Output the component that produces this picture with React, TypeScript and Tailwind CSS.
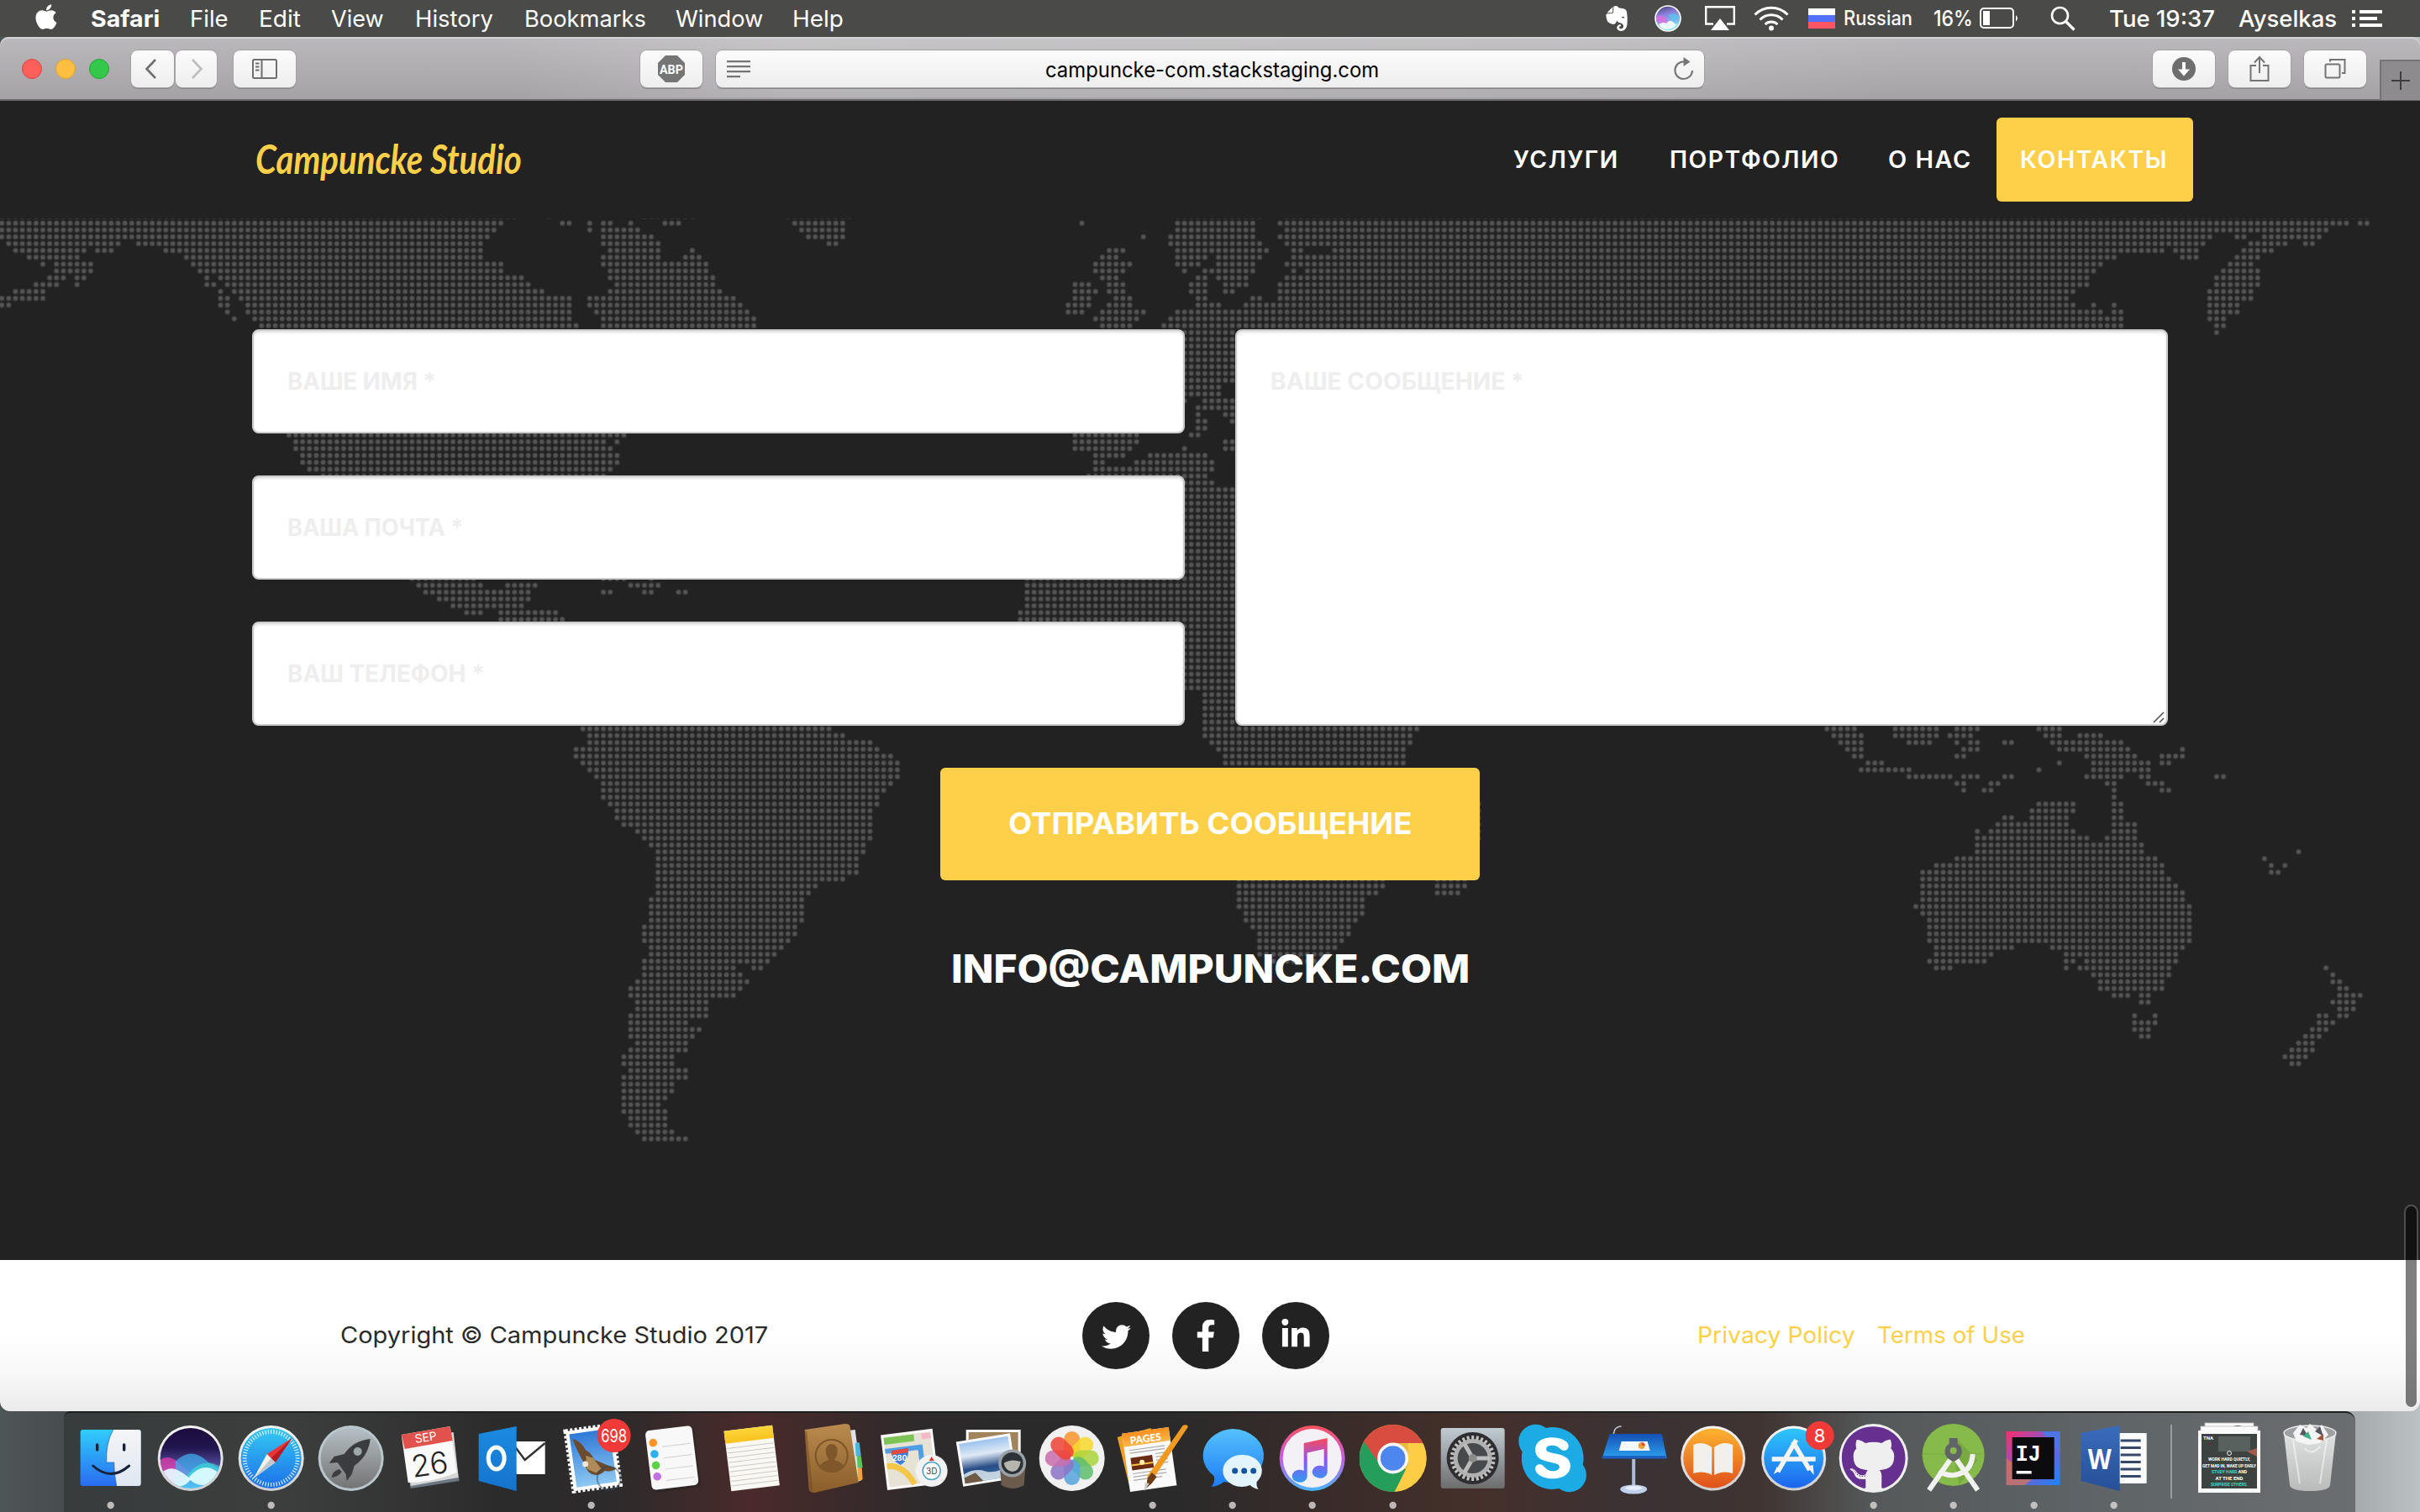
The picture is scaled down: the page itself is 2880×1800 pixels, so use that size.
import React, { useLayoutEffect, useRef, useState } from "react";
import { FaApple, FaEvernote, FaTwitter, FaFacebookF, FaLinkedinIn, FaGithub, FaSkype } from "react-icons/fa";

/* ------------------------------------------------------------------ */
/* Text squeezed or stretched to a fixed measure                       */
/* ------------------------------------------------------------------ */

function Fit({ w, className = "", children }: { w: number; className?: string; children: string }) {
  const ref = useRef<HTMLSpanElement>(null);
  const [scale, setScale] = useState(1);
  useLayoutEffect(() => {
    if (ref.current) setScale(w / ref.current.offsetWidth);
  }, [w]);
  return (
    <span className={`inline-block shrink-0 whitespace-nowrap ${className}`} style={{ width: w }}>
      <span ref={ref} className="inline-block origin-left" style={{ transform: `scaleX(${scale})` }}>
        {children}
      </span>
    </span>
  );
}

/* ------------------------------------------------------------------ */
/* Dotted world map                                                    */
/* ------------------------------------------------------------------ */

const PITCH = 8.135;
const COL0 = 2.2;
const ROW0 = 265.65;

type Region = { x: number; unit: number; rows: [number, ...number[]][] };

// Each row: row index, then start/end pairs measured in the region's own units.
const REGIONS: Region[] = [
  {
    x: 0,
    unit: 1.0814,
    rows: [
      [-1, 0, 662, 707, 707, 830, 892, 1015, 1095],
      [0, 0, 648, 725, 733, 759, 759, 777, 786, 812, 812, 857, 874, 1024, 1086],
      [1, 0, 640, 759, 759, 777, 822, 1032, 1086],
      [2, 0, 630, 777, 838, 1041, 1086],
      [3, 12, 152, 180, 620, 777, 848, 1068, 1077],
      [4, 20, 110, 127, 145, 215, 620, 786, 848, 891, 891],
      [5, 38, 100, 241, 620, 777, 848, 883, 900],
      [6, 55, 55, 72, 118, 250, 645, 777, 910],
      [7, 72, 118, 258, 645, 786, 910],
      [8, 65, 82, 100, 109, 267, 267, 284, 672, 786, 918],
      [9, 46, 74, 100, 100, 267, 276, 293, 681, 795, 918],
      [10, 20, 56, 285, 285, 302, 698, 786, 927],
      [11, 3, 56, 284, 293, 311, 733, 759, 945],
      [12, 3, 12, 284, 293, 320, 733, 759, 954],
      [13, 293, 293, 320, 733, 768, 962],
      [14, 302, 302, 328, 733, 777, 971],
      [15, 337, 742, 777, 971],
      [31, 373, 804, 1385, 1463],
      [32, 381, 777, 795, 795, 1385, 1463],
      [33, 381, 786, 1385, 1455],
      [34, 390, 795, 1411, 1446, 1481, 1516],
      [35, 390, 795, 1411, 1420, 1463, 1516],
      [36, 399, 786, 1411, 1516],
      [37, 417, 777, 1402, 1516],
      [52, 532, 612, 777, 804, 839, 839, 1323, 1516],
      [53, 540, 618, 655, 690, 812, 848, 1323, 1516],
      [54, 549, 681, 777, 786, 830, 839, 874, 883, 1323, 1516],
      [55, 567, 681, 1323, 1516],
      [56, 585, 672, 1323, 1516],
      [57, 602, 620, 646, 716, 1314, 1516],
      [58, 646, 725, 1314, 1516],
    ],
  },
  {
    x: 1200,
    unit: 3,
    rows: [
      [-1, 606, 900],
      [0, 264, 264, 606, 875],
      [1, 606, 875],
      [2, 484, 484, 582, 875],
      [3, 582, 900],
      [4, 362, 411, 606, 925],
      [5, 338, 387, 606, 705, 752, 900],
      [6, 313, 436, 606, 680, 752, 875],
      [7, 313, 411, 630, 630, 704, 875],
      [8, 338, 387, 680, 705, 752, 850],
      [9, 240, 289, 362, 411, 655, 705, 777, 850],
      [10, 240, 313, 362, 411, 655, 705, 777, 802],
      [11, 240, 289, 387, 436, 680, 705, 875, 900],
      [12, 215, 289, 362, 436, 680, 753, 850, 948],
      [13, 215, 264, 338, 484, 606, 948],
      [14, 313, 460, 582, 948],
      [15, 338, 436, 557, 948],
    ],
  },
  {
    x: 1400,
    unit: 1.0595,
    rows: [
      [-1, 140, 1505],
      [0, 132, 1475, 1494, 1503],
      [1, 140, 1450],
      [2, 132, 1303, 1339, 1348, 1374, 1442],
      [3, 140, 1295, 1356, 1399, 1425, 1434],
      [4, 149, 158, 200, 1244, 1261, 1287, 1348, 1382],
      [5, 149, 1184, 1270, 1287, 1339, 1365],
      [6, 140, 1167, 1330, 1356],
      [7, 149, 149, 166, 1158, 1322, 1365],
      [8, 140, 1150, 1313, 1365],
      [9, 132, 1150, 1313, 1365],
      [10, 132, 1132, 1304, 1356],
      [11, 132, 1124, 1304, 1356],
      [12, 132, 1132, 1158, 1158, 1184, 1184, 1304, 1339],
      [13, 132, 1167, 1184, 1193, 1304, 1339],
      [14, 132, 1193, 1304, 1322],
      [15, 132, 1193, 1313, 1322],
      [16, 3, 72, 1313, 1313],
      ...[17, 18, 19, 20, 21, 22, 23].map((r): [number, number, number] => [r, 3, 72]),
      [24, 3, 54],
      [25, 3, 54],
      [26, 11, 11, 37, 72],
      [27, 28, 72],
      [28, 28, 28, 63, 72],
      [29, 28, 37, 72, 72],
      [30, 28, 37],
      [31, 20, 28],
      [32, 63, 72],
      [33, 11, 11, 63, 72],
      [34, 3, 37],
      [35, 3, 46],
      [36, 3, 46],
      [37, 3, 37],
      [38, 3, 46],
      ...Array.from({ length: 30 }, (_, i): [number, number, number] => [39 + i, 3, 72]),
      ...[69, 70, 71, 72, 73].map((r): [number, number, number] => [r, 37, 72]),
    ],
  },
  {
    x: 600,
    unit: 1.2544,
    rows: [
      [74, 117, 487, 1047, 1365],
      [75, 127, 507, 1047, 1355],
      [76, 127, 548, 1057, 1355],
      [77, 107, 558, 1067, 1345],
      [78, 107, 578, 1077, 1345],
      [79, 117, 589, 1077, 1345],
      [80, 127, 589],
      [81, 138, 589],
      [82, 148, 578],
      [83, 148, 568],
      [84, 148, 558],
      [85, 158, 558, 1454, 1454],
      [86, 168, 548, 1454, 1454],
      [87, 168, 548, 1454, 1454],
      [88, 178, 548, 1454, 1454],
      [89, 199, 548, 1454, 1454],
      [90, 209, 548, 1454, 1454],
      [91, 219, 538],
      [92, 230, 538],
      [93, 230, 528],
      [94, 230, 528],
      [95, 230, 528],
      [96, 230, 507, 1098, 1314, 1395, 1436],
      [97, 230, 466, 1098, 1314, 1395, 1436],
      [98, 230, 456, 1098, 1304, 1395, 1426],
      [99, 219, 446, 1098, 1283],
      [100, 219, 446, 1098, 1283],
      [101, 219, 446, 1108, 1283],
      [102, 219, 446, 1108, 1273],
      [103, 209, 436, 1118, 1263],
      [104, 209, 436, 1128, 1263],
      [105, 209, 425, 1128, 1253],
      [106, 219, 415, 1128, 1243],
      [107, 219, 405, 1128, 1233],
      [108, 209, 395, 1150, 1212],
      [109, 209, 344, 374, 384],
      [110, 209, 354],
      [111, 199, 364],
      [112, 189, 354],
      [113, 189, 344],
      [114, 199, 303],
      [115, 199, 303],
      [116, 189, 303],
      [117, 189, 273],
      [118, 189, 293],
      [119, 189, 283],
      [120, 199, 273],
      [121, 189, 273],
      [122, 179, 252],
      [123, 179, 252],
      [124, 189, 273],
      [125, 179, 273],
      [126, 179, 252],
      [127, 179, 252],
      [128, 179, 242],
      [129, 179, 232],
      [130, 179, 242],
      [131, 189, 242],
      [132, 189, 242],
      [133, 199, 252],
      [134, 209, 273],
    ],
  },
  {
    x: 1800,
    unit: 1.4519,
    rows: [
      [74, 545, 592, 663, 734, 770, 805, 912, 946],
      [75, 556, 604, 663, 734, 758, 793, 923, 947, 982, 1018],
      [76, 568, 604, 687, 722, 770, 770, 793, 805, 852, 864, 935, 1053],
      [77, 580, 604, 782, 805, 947, 1065, 1159, 1159],
      [78, 592, 604, 770, 782, 995, 1077, 1124, 1159],
      [79, 615, 639, 947, 947, 1006, 1100, 1124, 1136],
      [80, 604, 687, 911, 911, 1006, 1100],
      [81, 687, 758, 782, 805, 852, 864, 995, 1053, 1088, 1100, 1218, 1230],
      [82, 770, 782, 829, 840, 1030, 1041, 1100, 1124],
      [83, 782, 782, 817, 829, 1041, 1041, 1124, 1136],
      [84, 1041, 1041],
      [85, 911, 970, 1041, 1053],
      [86, 900, 970, 1041, 1053],
      [87, 852, 864, 900, 958, 1041, 1053],
      [88, 840, 958, 1041, 1077],
      [89, 805, 805, 829, 970, 1041, 1077],
      [90, 805, 994, 1030, 1077],
      [91, 805, 1088],
      [92, 805, 1088, 1360, 1360],
      [93, 770, 1112, 1301, 1301],
      [94, 734, 1124, 1313, 1313, 1336, 1336],
      [95, 710, 1124, 1313, 1324],
      [96, 710, 1136],
      [97, 710, 1147],
      [98, 710, 1159],
      [99, 710, 1159],
      [100, 698, 1171],
      [101, 710, 1171],
      [102, 722, 1171],
      [103, 722, 1171],
      [104, 722, 1171],
      [105, 722, 1171],
      [106, 734, 864, 935, 1159],
      [107, 734, 829, 958, 1147],
      [108, 722, 817, 958, 970, 994, 1147],
      [109, 734, 758, 958, 958, 982, 1136, 1407, 1407],
      [110, 1006, 1136, 1419, 1419],
      [111, 1018, 1124, 1419, 1430],
      [112, 1018, 1124, 1430, 1442],
      [113, 1041, 1065, 1088, 1100, 1430, 1466],
      [114, 1088, 1100, 1419, 1454],
      [115, 1430, 1454],
      [116, 1077, 1077, 1112, 1112, 1395, 1407, 1430, 1442],
      [117, 1077, 1112, 1395, 1419],
      [118, 1077, 1100, 1384, 1407],
      [119, 1088, 1100, 1372, 1395],
      [120, 1360, 1384],
      [121, 1348, 1384],
      [122, 1336, 1372],
      [123, 1348, 1360],
    ],
  },
];

function buildDots(): string {
  const seen = new Set<string>();
  let d = "";
  for (const { x, unit, rows } of REGIONS) {
    const col = (v: number) => Math.round((x + v / unit - COL0) / PITCH);
    for (const [row, ...spans] of rows) {
      for (let i = 0; i < spans.length; i += 2) {
        for (let c = col(spans[i]); c <= col(spans[i + 1]); c++) {
          const key = `${row}:${c}`;
          if (seen.has(key)) continue;
          seen.add(key);
          d += `M${(COL0 + c * PITCH).toFixed(2)} ${(ROW0 + row * PITCH).toFixed(2)}h.01`;
        }
      }
    }
  }
  return d;
}

const DOTS = buildDots();

function WorldMap() {
  return (
    <svg className="absolute inset-0 h-full w-full" viewBox="0 260 2880 1240">
      <path d={DOTS} stroke="#383838" strokeWidth={7} strokeLinecap="round" />
      <path d={DOTS} stroke="#545454" strokeWidth={4.8} strokeLinecap="round" />
    </svg>
  );
}

/* ------------------------------------------------------------------ */
/* Menu bar                                                            */
/* ------------------------------------------------------------------ */

function MenuBar() {
  return (
    <div className="flex h-[44px] shrink-0 items-center bg-[#4a4a48] pr-[45px] pl-[40px] font-['Inter'] text-[27.5px] leading-[44px] text-white">
      <FaApple className="mt-[-5px] mr-[38px] h-[34px] w-[30px]" />
      <Fit w={82} className="mr-[36px] font-bold">Safari</Fit>
      <Fit w={46} className="mr-[36px]">File</Fit>
      <Fit w={50} className="mr-[36px]">Edit</Fit>
      <Fit w={63} className="mr-[37px]">View</Fit>
      <Fit w={93} className="mr-[37px]">History</Fit>
      <Fit w={145} className="mr-[35px]">Bookmarks</Fit>
      <Fit w={104} className="mr-[35px]">Window</Fit>
      <Fit w={61}>Help</Fit>
      <div className="ml-auto flex items-center">
        <FaEvernote className="mr-[28px] h-[34px] w-[34px]" />
        <svg className="mr-[28px]" width="32" height="32" viewBox="0 0 32 32">
          <defs>
            <linearGradient id="mSiri" x1="0" y1="0" x2="0.3" y2="1">
              <stop offset="0" stopColor="#3b3b66" />
              <stop offset=".4" stopColor="#8a7fdc" />
              <stop offset="1" stopColor="#7fe6f5" />
            </linearGradient>
          </defs>
          <circle cx="16" cy="16" r="15" fill="url(#mSiri)" stroke="#fff" strokeWidth="1.6" />
          <path d="M2 15q6-6 12 1t-7 7q-5-4-5-8z" fill="#e06be0" opacity=".8" />
          <path d="M17 12q8-4 12 3l-6 5z" fill="#58c6f0" opacity=".8" />
          <path d="M5 23q6-4 9-1 4-6 9-1t4 1q-4 7-12 7-7 0-10-6z" fill="#fff" opacity=".85" />
        </svg>
        <svg className="mr-[22px]" width="36" height="30" viewBox="0 0 36 30" fill="none" stroke="#fff" strokeWidth="2.4">
          <path d="M10 21.500H1.200V1.200h33.600V21.500H26" />
          <path d="M18 15l11 14H7z" fill="#fff" stroke="none" />
        </svg>
        <svg className="mr-[23px]" width="42" height="30" viewBox="0 0 42 30" fill="none" stroke="#fff" strokeWidth="3">
          <path d="M1.500 10.500a27 27 0 0 1 39 0M7.500 16.500a19 19 0 0 1 27 0M13.500 22a11 11 0 0 1 15 0" />
          <circle cx="21" cy="26.500" r="3" fill="#fff" stroke="none" />
        </svg>
        <div className="mr-[10px] h-[24px] w-[32px]">
          <div className="h-[8px] bg-white" />
          <div className="h-[8px] bg-[#5470fb]" />
          <div className="h-[8px] bg-[#fd5562]" />
        </div>
        <Fit w={82} className="mr-[25px] text-[24px] font-medium">Russian</Fit>
        <Fit w={47} className="mr-[8px] text-[26px] font-medium">16%</Fit>
        <svg className="mr-[38px]" width="46" height="26" viewBox="0 0 46 26" fill="none" stroke="#fff" strokeWidth="2">
          <rect x="1" y="1" width="39" height="23" rx="4" />
          <rect x="4" y="4" width="8" height="17" fill="#fff" stroke="none" />
          <path d="M43 9q4 3.500 0 7.500z" fill="#fff" stroke="none" />
        </svg>
        <svg className="mr-[40px]" width="30" height="30" viewBox="0 0 30 30" fill="none" stroke="#fff" strokeWidth="2.6">
          <circle cx="11.500" cy="11.500" r="9.500" />
          <path d="M18.500 18.500l10 10" strokeWidth="3.200" />
        </svg>
        <Fit w={126} className="mr-[28px] font-medium">Tue 19:37</Fit>
        <Fit w={117} className="mr-[18px] font-medium">Ayselkas</Fit>
        <svg width="36" height="22" viewBox="0 0 36 22" fill="#fff">
          <path d="M0 1h4v4H0zM9 1h27v4H9zM0 9h4v4H0zM9 9h21v4H9zM0 17h4v4H0zM9 17h27v4H9z" />
        </svg>
      </div>
    </div>
  );
}

/* ------------------------------------------------------------------ */
/* Safari toolbar                                                      */
/* ------------------------------------------------------------------ */

function ToolButton({ className, children }: { className: string; children: React.ReactNode }) {
  return (
    <div
      className={`flex h-[44px] shrink-0 items-center justify-center rounded-[8px] bg-linear-to-b from-[#fbfbfb] to-[#eeeeee] shadow-[0_0_0_1px_#a3a1a3,0_2px_0_#8b898b] ${className}`}
    >
      {children}
    </div>
  );
}

function Toolbar() {
  return (
    <div className="relative h-[76px] shrink-0 rounded-t-[10px] border-b-[2px] border-[#6c6b6c] bg-linear-to-b from-[#bbb9bb] to-[#a4a2a5] shadow-[inset_0_2px_0_#d4d3d4]">
      <div className="absolute inset-x-[600px] inset-y-[2px] bg-[linear-gradient(90deg,transparent,rgba(255,255,255,.18)_20%,rgba(255,255,255,.12)_75%,transparent)]" />
      <div className="relative flex h-[76px] items-center pl-[26px]">
        <div className="mr-[16px] h-[24px] w-[24px] rounded-full border border-[#e0443f] bg-[#fd5f5a]" />
        <div className="mr-[16px] h-[24px] w-[24px] rounded-full border border-[#dfa032] bg-[#fdbe41]" />
        <div className="mr-[26px] h-[24px] w-[24px] rounded-full border border-[#21a532] bg-[#33c84a]" />
        <ToolButton className="mr-[2px] w-[51px]">
          <svg className="mr-[4px]" width="16" height="26" viewBox="0 0 16 26" fill="none" stroke="#6f6f6f" strokeWidth="2.600">
            <path d="M13 2L2.500 13 13 24" />
          </svg>
        </ToolButton>
        <ToolButton className="mr-[20px] w-[49px]">
          <svg width="16" height="26" viewBox="0 0 16 26" fill="none" stroke="#bdbdbd" strokeWidth="2.600">
            <path d="M3 2l10.500 11L3 24" />
          </svg>
        </ToolButton>
        <ToolButton className="w-[74px]">
          <svg width="30" height="24" viewBox="0 0 30 24" fill="none" stroke="#6f6f6f" strokeWidth="2">
            <rect x="1" y="1" width="28" height="22" rx="1.500" />
            <path d="M11.500 1v22M4 5.500h4.500M4 9.500h4.500M4 13.500h4.500" />
          </svg>
        </ToolButton>
        <ToolButton className="mr-[16px] ml-[410px] w-[74px]">
          <svg width="34" height="34" viewBox="0 0 34 34">
            <path d="M10 1h14l9 9v14l-9 9H10l-9-9V10z" fill="#757575" />
            <text x="17" y="22.500" textAnchor="middle" textLength="28" lengthAdjust="spacingAndGlyphs" fontFamily="Roboto" fontWeight="700" fontSize="15" fill="#fff">
              ABP
            </text>
          </svg>
        </ToolButton>
        <ToolButton className="w-[1176px]">
          <svg className="ml-[13px]" width="28" height="22" viewBox="0 0 28 22" fill="#747474">
            <path d="M0 1h28v2.200H0zM0 7h28v2.200H0zM0 13h28v2.200H0zM0 19h16v2.200H0z" />
          </svg>
          <div className="mt-[2px] flex-1 text-center font-['Inter'] text-[25px] leading-[44px] text-black">
            <Fit w={397} className="text-left">campuncke-com.stackstaging.com</Fit>
          </div>
          <svg className="mr-[12px]" width="24" height="28" viewBox="0 0 24 28" fill="none" stroke="#767676" strokeWidth="2.200">
            <path d="M13 5.500A10.300 10.300 0 1 0 22 16" />
            <path d="M11.500 0l8 5.500-8 5.500z" fill="#767676" stroke="none" />
          </svg>
        </ToolButton>
        <ToolButton className="mr-[16px] ml-[534px] w-[74px]">
          <svg width="28" height="28" viewBox="0 0 28 28">
            <circle cx="14" cy="14" r="14" fill="#6d6d6d" />
            <path d="M12 6h4v8.500h5L14 22.500 7 14.500h5z" fill="#fff" />
          </svg>
        </ToolButton>
        <ToolButton className="mr-[16px] w-[74px]">
          <svg width="24" height="32" viewBox="0 0 24 32" fill="none" stroke="#747474" strokeWidth="2">
            <path d="M8 12H1.500v18h21V12H16M12 21V3M6 8.500l6-6.500 6 6.500" />
          </svg>
        </ToolButton>
        <ToolButton className="w-[74px]">
          <svg width="26" height="26" viewBox="0 0 26 26" fill="none" stroke="#747474" strokeWidth="2">
            <rect x="1.500" y="7.500" width="17" height="16" rx="1.500" />
            <path d="M7 4.500V2h17.500v16H21" />
          </svg>
        </ToolButton>
        <div className="mt-[26px] ml-[16px] flex h-[48px] w-[48px] items-center justify-center border-t-[2px] border-l-[2px] border-[#767476] bg-[#8d8b8e]">
          <svg width="22" height="22" viewBox="0 0 22 22" stroke="#3e3e3e" strokeWidth="2">
            <path d="M11 0v22M0 11h22" />
          </svg>
        </div>
      </div>
    </div>
  );
}

/* ------------------------------------------------------------------ */
/* Web page                                                            */
/* ------------------------------------------------------------------ */

function SiteHeader() {
  return (
    <header className="flex h-[140px] shrink-0 items-center bg-[#222222] pr-[270px] pl-[304px] font-['Inter'] text-[28px] font-semibold text-white">
      <Fit w={317} className="mt-[-2px] font-['Lato'] text-[47px] leading-[60px] font-bold text-[#fed049] italic">Campuncke Studio</Fit>
      <nav className="ml-auto flex items-center tracking-[1.5px]">
        <Fit w={126} className="mr-[60px]">УСЛУГИ</Fit>
        <Fit w={202} className="mr-[58px]">ПОРТФОЛИО</Fit>
        <Fit w={100} className="mr-[29px]">О НАС</Fit>
        <div className="flex h-[100px] w-[234px] items-center rounded-[6px] bg-[#fed049] pl-[28px]">
          <Fit w={176}>КОНТАКТЫ</Fit>
        </div>
      </nav>
    </header>
  );
}

function Field({ label, w, tall = false }: { label: string; w: number; tall?: boolean }) {
  return (
    <div
      className={`relative w-[1110px] rounded-[8px] border-[2px] border-[#cccccc] bg-white pt-[38px] pl-[40px] font-['Inter'] text-[28px] leading-[44px] font-bold text-[#eeeeee] shadow-[inset_0_2px_3px_rgba(0,0,0,.12)] ${tall ? "h-[472px]" : "h-[124px]"}`}
    >
      <Fit w={w}>{label}</Fit>
      {tall && (
        <svg className="absolute right-[1px] bottom-[1px]" width="16" height="16" viewBox="0 0 16 16" stroke="#555" strokeWidth="1.600">
          <path d="M2 15L14 3M9 15l5-5" />
        </svg>
      )}
    </div>
  );
}

function ContactSection() {
  return (
    <main className="relative h-[1240px] shrink-0 bg-[#222222]">
      <WorldMap />
      <div className="relative flex flex-col items-center pt-[132px]">
        <div className="flex gap-[60px]">
          <div className="flex flex-col gap-[50px]">
            <Field label="ВАШЕ ИМЯ *" w={177} />
            <Field label="ВАША ПОЧТА *" w={209} />
            <Field label="ВАШ ТЕЛЕФОН *" w={235} />
          </div>
          <Field label="ВАШЕ СООБЩЕНИЕ *" w={302} tall />
        </div>
        <div className="mt-[50px] flex h-[134px] w-[642px] items-center justify-center rounded-[6px] bg-[#fed049] font-['Inter'] text-[36px] leading-[44px] font-bold text-white">
          <Fit w={480} className="mt-[-3px]">ОТПРАВИТЬ СООБЩЕНИЕ</Fit>
        </div>
        <div className="mt-[75px] font-['Inter'] text-[47px] leading-[60px] font-extrabold text-white">
          <Fit w={617}>INFO@CAMPUNCKE.COM</Fit>
        </div>
      </div>
    </main>
  );
}

function Social({ children }: { children: React.ReactNode }) {
  return <div className="flex h-[80px] w-[80px] items-center justify-center rounded-full bg-[#222222] text-white">{children}</div>;
}

function SiteFooter() {
  return (
    <footer className="flex h-[180px] shrink-0 items-center rounded-b-[12px] bg-[linear-gradient(180deg,#fff_0,#fff_48%,#f8f8f8_75%,#ebebeb_100%)] pl-[405px] font-['Inter'] text-[27px] text-[#2a2a2a]">
      <Fit w={509}>Copyright © Campuncke Studio 2017</Fit>
      <div className="ml-[374px] flex gap-[27px]">
        <Social>
          <FaTwitter className="mt-[3px] h-[35px] w-[35px]" />
        </Social>
        <Social>
          <FaFacebookF className="h-[38px] w-[24px]" />
        </Social>
        <Social>
          <FaLinkedinIn className="mt-[-2px] h-[38px] w-[36px]" />
        </Social>
      </div>
      <Fit w={188} className="ml-[438px] text-[#fed049]">Privacy Policy</Fit>
      <Fit w={176} className="ml-[26px] text-[#fed049]">Terms of Use</Fit>
    </footer>
  );
}

/* ------------------------------------------------------------------ */
/* Dock                                                                */
/* ------------------------------------------------------------------ */

function Cell({ running = false, children }: { running?: boolean; children: React.ReactNode }) {
  return (
    <svg className="w-[95.370px] shrink-0 overflow-visible" height="118" viewBox="-47.685 2 95.370 118">
      {children}
      {running && <circle cx="0" cy="112" r="4.200" fill="#d6d0d0" fillOpacity=".85" />}
    </svg>
  );
}

function Badge({ x, y, r, label }: { x: number; y: number; r: number; label: string }) {
  return (
    <>
      <circle cx={x} cy={y} r={r} fill="#f03a37" />
      <text x={x} y={y + 8} textAnchor="middle" fontFamily="Inter" fontSize="22" fill="#fff" textLength={label.length > 1 ? 31 : undefined} lengthAdjust="spacingAndGlyphs">
        {label}
      </text>
    </>
  );
}

function Gradients() {
  const g: [string, string[]][] = [
    ["finder", ["#2fcdfb", "#2a6cf0"]],
    ["face", ["#f4f5f7", "#dfe7f1"]],
    ["siri", ["#1c0a3c", "#22164f", "#5a52a8", "#7ce8f4"]],
    ["compass", ["#35c9f2", "#1c6fe8"]],
    ["launch", ["#b5bfc5", "#747474"]],
    ["ring", ["#f6f6f6", "#cfcfcf"]],
    ["outlook", ["#1a8be0", "#1573cd"]],
    ["mail", ["#2f79d8", "#8cc8f2"]],
    ["notesTop", ["#fbd53a", "#f9c31f"]],
    ["contacts", ["#b98b4f", "#8a5d2b"]],
    ["sea", ["#9cc3ee", "#dfe9f5", "#274c86", "#3f74a6"]],
    ["pagesTop", ["#f78f1e", "#fbb74b"]],
    ["msg", ["#55c1fb", "#1d7ef7"]],
    ["note", ["#fb4b57", "#8d55f2", "#2f9bf2"]],
    ["ringTunes", ["#f9525c", "#c65be8", "#46b8f7"]],
    ["prefs", ["#c1ccd2", "#6c6c6c"]],
    ["keynote", ["#1450b4", "#2ea2ee"]],
    ["books", ["#fdb330", "#e0501b"]],
    ["store", ["#2fc6fb", "#1d66ee"]],
    ["ij", ["#fb2d6d", "#7c5bd0", "#1d84f5"]],
    ["word", ["#3a6cbc", "#264f96"]],
    ["bin", ["#e9eaea", "#bfc1c1"]],
  ];
  return (
    <svg className="absolute h-0 w-0">
      <defs>
        {g.map(([id, stops]) => (
          <linearGradient key={id} id={id} x1="0" y1="0" x2={id === "ij" ? "1" : "0"} y2="1">
            {stops.map((c, i) => (
              <stop key={i} offset={i / (stops.length - 1)} stopColor={c} />
            ))}
          </linearGradient>
        ))}
        <clipPath id="siriClip">
          <circle cx="0" cy="56" r="36" />
        </clipPath>
        <clipPath id="chromeClip">
          <circle cx="0" cy="56" r="40" />
        </clipPath>
      </defs>
    </svg>
  );
}

const ring = (n: number) => Array.from({ length: n }, (_, i) => (360 / n) * i);

function Dock() {
  return (
    <div className="flex h-[120px] w-[2727px] rounded-tr-[12px] rounded-tl-[8px] border-t-[2px] border-[#1e201f] bg-[linear-gradient(90deg,#373c3c_0,#3c3e3d_10%,#2b2b2b_19%,#2d2a2b_24%,#4a2a2a_30%,#2c2a2b_38%,#2a2a2b_48%,#3a2c29_56%,#45302b_62%,#3a3234_69%,#3f3431_74%,#55595a_79%,#5d6366_88%,#6b6e71_100%)] pl-[8px]">
      <Gradients />
      <Cell running>
        <rect x="-36" y="22" width="72" height="67" rx="3" fill="url(#finder)" />
        <path d="M3 22h30q3 0 3 3v61q0 3-3 3H7Q4 75 4 61h-9Q-6 38 3 22z" fill="url(#face)" />
        <path d="M3 22Q-6 38-5 61h9q0 14 3 28" fill="none" stroke="#1c5fa8" strokeWidth="1.200" opacity=".6" />
        <path d="M-16 40v6M16 40v6" stroke="#16233a" strokeWidth="3.400" strokeLinecap="round" />
        <path d="M-21 65q21 19 43 0" fill="none" stroke="#16233a" strokeWidth="3" strokeLinecap="round" />
      </Cell>
      <Cell>
        <circle cx="0" cy="56" r="39" fill="url(#ring)" />
        <circle cx="0" cy="56" r="36" fill="url(#siri)" />
        <g clipPath="url(#siriClip)">
          <path d="M-38 60q10-10 22 0t22 22l-44 8z" fill="#e53cae" opacity=".75" />
          <path d="M-18 60q18-18 36-2t24 4v34h-60z" fill="#3fb4f4" opacity=".7" />
          <path d="M38 68q-10-8-22-6T-8 82l40 4z" fill="#39e6d6" opacity=".6" />
          <path d="M-36 74q10-8 18-5t16 10q10-12 20-12t18 9q-10 12-20 12T0 82q-8 9-18 8t-18-16z" fill="#e6fdff" opacity=".9" />
        </g>
      </Cell>
      <Cell running>
        <circle cx="0" cy="56" r="39" fill="url(#ring)" />
        <circle cx="0" cy="56" r="36" fill="url(#compass)" />
        {ring(60).map((a) => (
          <path key={a} d="M0 22v5" stroke="#fff" strokeWidth="1.200" transform={`rotate(${a} 0 56)`} opacity=".85" />
        ))}
        <path d="M25 32L5 61-5 51z" fill="#ec3437" />
        <path d="M-21 80L5 61-5 51z" fill="#f2f2f2" />
        <path d="M25 32L5 61 0 56z" fill="#b91b24" />
        <path d="M-21 80L5 61 0 56z" fill="#c4c8cc" />
      </Cell>
      <Cell>
        <circle cx="0" cy="56" r="39" fill="#b9c6cb" />
        <circle cx="0" cy="56" r="36" fill="url(#launch)" />
        <path d="M23 33q-20 2-31 18l-12 3-6 8 10-1 10 14 1 8 6-8 3-10q17-12 19-32z" fill="#3a3c3f" />
        <circle cx="8" cy="48" r="5" fill="#a0a7ab" />
        <path d="M-14 69q-8 2-9 10 8-1 12-7z" fill="#3a3c3f" />
      </Cell>
      <Cell>
        <g transform="translate(-1 0)">
          <path d="M-33 33l58-10 10 60-58 9z" fill="#6c7880" />
          <path d="M-30 35l58-10 6 54-57 10z" fill="#d6d6d6" />
          <path d="M-34 28l58-10 8 55q-30 12-58 12z" fill="#fafafa" />
          <path d="M-34 28l58-10 3 17-57 10z" fill="#e2524c" />
          <text transform="rotate(-9 -4 38)" x="-4" y="36" textAnchor="middle" fontFamily="Inter" fontSize="14" fill="#fff">SEP</text>
          <text transform="rotate(-8 0 66)" x="0" y="76" textAnchor="middle" fontFamily="Inter" fontWeight="300" fontSize="36" fill="#222">26</text>
        </g>
      </Cell>
      <Cell>
        <path d="M5 36h35v39H5z" fill="#fff" />
        <path d="M4 42l12 16 24-20" fill="none" stroke="#333" strokeWidth="2.500" />
        <path d="M-39 27L6 18v77l-45-12z" fill="url(#outlook)" />
        <ellipse cx="-18" cy="56" rx="9.500" ry="13" fill="none" stroke="#fff" strokeWidth="5" />
      </Cell>
      <Cell running>
        <g transform="rotate(-8 0 56)">
          <rect x="-26" y="20" width="56" height="72" fill="#fdfdfd" stroke="#fdfdfd" strokeWidth="5" strokeDasharray="3 2.500" />
          <rect x="-22" y="24" width="48" height="64" fill="url(#mail)" />
          <path d="M-19 30q10 4 14 16 5 2 8 12 16 10 25 14-6 4-14 1-8 6-16 2-6-4-7-14-6-14-10-31z" fill="#6b4a2d" />
          <path d="M-6 52l8 4 8 14-7 4-10-6z" fill="#b08a58" />
          <circle cx="-8" cy="62" r="3.500" fill="#f0e7d6" />
        </g>
        <circle cx="21" cy="80" r="14" fill="none" stroke="#33475c" strokeWidth="2" opacity=".5" />
        <Badge x={27} y={29} r={20} label="698" />
      </Cell>
      <Cell>
        <g transform="rotate(-7 0 56)">
          <rect x="-26" y="22" width="56" height="72" rx="4" fill="#222" opacity=".5" />
          <rect x="-28" y="20" width="56" height="71" rx="5" fill="#f8f8f8" />
          {["#fb9426", "#2ab0f5", "#5fd04a", "#c36fe0"].map((c, i) => (
            <g key={c}>
              <circle cx="-20" cy={35 + i * 13.500} r="4.800" fill={c} />
              <path d={`M-10 ${41 + i * 13.500}h34`} stroke="#cfcfcf" strokeWidth="1" />
            </g>
          ))}
        </g>
      </Cell>
      <Cell>
        <g transform="rotate(-7 0 56)">
          <rect x="-29" y="20" width="58" height="72" fill="#f9f8f2" />
          <path d="M-29 20h58v15h-58z" fill="url(#notesTop)" />
          {ring(9).map((a, i) => (
            <path key={a} d={`M-28 ${41 + i * 5.600}h56`} stroke="#c9c9c6" strokeWidth="1" />
          ))}
        </g>
      </Cell>
      <Cell>
        <path d="M12 24l16-2 8 60-10 4z" fill="#dfe2e4" />
        <path d="M28 38l5-1 2 16-6 1z" fill="#4db4de" />
        <path d="M30 54l5-1 2 14-6 1z" fill="#5dc554" />
        <path d="M31 68l5-1 1 14-6 2z" fill="#f6a52c" />
        <path d="M-32 22l48-7q6 0 6 4l10 66-52 12q-6 0-7-4z" fill="url(#contacts)" />
        <path d="M-31 24L-24 94" stroke="#74491e" strokeWidth="3" opacity=".5" />
        <circle cx="0" cy="53" r="19" fill="none" stroke="#7e5526" strokeWidth="2" />
        <path d="M-7 47a7 8 0 0 1 14 0q0 7-4 11 9 2 12 9-7 6-15 6t-15-6q3-7 12-9-4-4-4-11z" fill="#80572a" />
      </Cell>
      <Cell>
        <g transform="rotate(-7 0 56)">
          <rect x="-34" y="24" width="62" height="66" fill="#fbfbfb" />
          <rect x="-31" y="27" width="56" height="60" fill="#e6e2d6" />
          <path d="M-31 28h36v8h-36z" fill="#7cc454" />
          <path d="M14 28h11v7H14z" fill="#f4b9c4" />
          <path d="M-31 44h42v40" fill="none" stroke="#4f9ee6" strokeWidth="6" />
          <path d="M-31 62q20 0 30 25" fill="none" stroke="#f5c748" strokeWidth="7" />
        </g>
        <path d="M-25 47l20-3q2 14-9 20-10-4-11-17z" fill="#3d7fe0" />
        <path d="M-25 47l20-3v5l-20 3z" fill="#e04a40" />
        <text x="-15" y="59" textAnchor="middle" fontFamily="Inter" fontWeight="700" fontSize="9" fill="#fff">280</text>
        <circle cx="23" cy="71" r="19" fill="#f2f2f2" />
        <circle cx="23" cy="71" r="10.500" fill="#fff" stroke="#4da3c0" strokeWidth="1.500" />
        <path d="M23 54l3 5h-6z" fill="#e8342e" />
        <text x="23" y="75" textAnchor="middle" fontFamily="Inter" fontSize="10" fill="#444">3D</text>
      </Cell>
      <Cell>
        <rect x="-31" y="22" width="65" height="56" fill="#fafafa" />
        <rect x="-28" y="25" width="59" height="50" fill="#a2845c" />
        <g transform="rotate(-9 0 58)">
          <rect x="-39" y="30" width="65" height="54" fill="#fafafa" />
          <rect x="-36" y="33" width="59" height="48" fill="url(#sea)" />
          <path d="M-36 70q14-6 26 0t33-4v15h-59z" fill="#e6eef2" opacity=".8" />
          <path d="M-36 74l14-4 8 11h-22z" fill="#6e5a45" />
        </g>
        <path d="M9 62h31l-2 26q-13 8-27 0z" fill="#6b5b4c" />
        <circle cx="24" cy="62" r="16.500" fill="#9aa1a6" />
        <circle cx="24" cy="62" r="13" fill="#2d3238" />
        <path d="M14 62q8-6 20-2-2 12-10 12-8-1-10-10z" fill="#b7b6ae" />
      </Cell>
      <Cell>
        <circle cx="0" cy="56" r="39" fill="#f1f1f1" />
        {["#f9952d", "#f7d92c", "#aed43c", "#5fbe6c", "#57a5dc", "#8a75c7", "#c96fae", "#ef4436"].map((c, i) => (
          <rect key={c} x="-9.500" y="24" width="19" height="31" rx="9.500" fill={c} opacity=".86" transform={`rotate(${i * 45} 0 56)`} />
        ))}
        <circle cx="0" cy="56" r="2" fill="#fff" />
      </Cell>
      <Cell running>
        <path d="M-42 31l40-11 14 62-38 14z" fill="#f0a024" />
        <g transform="rotate(-8 0 56)">
          <rect x="-32" y="22" width="56" height="70" fill="#fafafa" />
          <path d="M-32 22h56v16h-56z" fill="url(#pagesTop)" />
          <text x="-5" y="36" textAnchor="middle" fontFamily="Lato" fontWeight="900" fontSize="12" fill="#fff">PAGES</text>
          <path d="M-26 52h26v15h-26z" fill="#6b2a12" />
          <path d="M-26 60h26v2h-26z" fill="#fbc04a" />
          <circle cx="-13" cy="59" r="3" fill="#fff0b0" />
          <path d="M-26 43h42M-26 46.500h42M4 51h14M4 55h14M4 59h14M4 63h14M-26 71h40M-26 75h40M-26 79h34" stroke="#aaa" strokeWidth="1.200" />
        </g>
        <path d="M36 17q6-2 6 2L1 80l-7 7 0-10z" fill="#f19a22" />
        <path d="M-1 73l6 5-6 8-7 6 2-12z" fill="#6d3b16" />
        <path d="M-4 86l-6 9 1-10z" fill="#c8ccd0" />
      </Cell>
      <Cell running>
        <path d="M0 21a38 32 0 1 1-10 63q-6 5-15 6 5-6 3-13A38 32 0 0 1 0 21z" fill="url(#msg)" />
        <path d="M13 52a22.500 19 0 1 0 8 36q4 4 10 5-3-4-2-9A22.500 19 0 0 0 13 52z" fill="#e4f4fd" />
        <path d="M3 71h.01M14 71h.01M25 71h.01" stroke="#14549c" strokeWidth="7" strokeLinecap="round" />
      </Cell>
      <Cell running>
        <circle cx="0" cy="56" r="39" fill="url(#ringTunes)" />
        <circle cx="0" cy="56" r="35" fill="#f4f1f6" />
        <path d="M-10 38l28-6v40a9 7.500 0 1 1-4-6V45l-20 4.500V77a9 7.500 0 1 1-4-6z" fill="url(#note)" />
      </Cell>
      <Cell running>
        <g clipPath="url(#chromeClip)">
          <rect x="-40" y="16" width="80" height="80" fill="#e9bb3d" />
          <path d="M0 56L-40 20v80H0l16-30z" fill="#259d5b" />
          <path d="M-40 28V10h85v28H0l-18 22z" fill="#d94c40" />
          <path d="M18 38h26v70H-4l22-44z" fill="#fdcd45" />
        </g>
        <circle cx="0" cy="56" r="18.500" fill="#f6f6f6" />
        <circle cx="0" cy="56" r="14.800" fill="#4d86ef" />
      </Cell>
      <Cell>
        <rect x="-38" y="20" width="76" height="72" rx="3" fill="url(#prefs)" />
        <circle cx="0" cy="56" r="31" fill="#2e2e30" />
        {ring(28).map((a) => (
          <path key={a} d="M0 29v5" stroke="#c2c2c2" strokeWidth="3" transform={`rotate(${a} 0 56)`} />
        ))}
        <circle cx="0" cy="56" r="20.500" fill="#48494b" stroke="#b0b0b0" strokeWidth="5" />
        {[90, 210, 330].map((a) => (
          <path key={a} d="M0 56V36" stroke="#bcbcbc" strokeWidth="5" transform={`rotate(${a} 0 56)`} />
        ))}
        <circle cx="0" cy="56" r="5" fill="#8b8b8b" />
      </Cell>
      <Cell>
        <circle cx="0" cy="56" r="28" fill="#fff" />
        <FaSkype x={-46} y={10} size={92} color="#1dabe6" />
      </Cell>
      <Cell>
        <path d="M-28 44L-22 22q3-4 8-4" fill="none" stroke="#b9c4cf" strokeWidth="1.600" />
        <path d="M-28 27h62l6 29h-77z" fill="url(#keynote)" />
        <path d="M-37 53h76v3.500h-76z" fill="#1d5fc4" />
        <path d="M-14 36h31l3 11h-37z" fill="#f4f8fb" />
        <circle cx="10" cy="41" r="4" fill="#e8a33c" />
        <path d="M10 37a4 4 0 0 1 4 4h-4z" fill="#e34c3c" />
        <path d="M-1.500 57h4v38h-4z" fill="#a9bddb" />
        <ellipse cx="0.500" cy="93" rx="16" ry="5.500" fill="#bfd0ea" />
        <ellipse cx="0.500" cy="91.500" rx="10" ry="2.500" fill="#e7effa" />
      </Cell>
      <Cell>
        <circle cx="0" cy="56" r="38.500" fill="url(#ring)" />
        <circle cx="0" cy="56" r="35.500" fill="url(#books)" />
        <path d="M-1.500 43q-10-8-22-3v34q12-4 22 2zM1.500 43q10-8 22-3v34q-12-4-22 2z" fill="#f3f0ec" />
      </Cell>
      <Cell>
        <circle cx="0" cy="56" r="38.500" fill="url(#ring)" />
        <circle cx="0" cy="56" r="35.500" fill="url(#store)" />
        <path d="M-1 36l20 34M3 34l-22 38M-26 57h52" stroke="#f5f5f5" strokeWidth="5.500" />
        <path d="M-20 66l-4 9 7-4zM16 66l8 10-1-12z" fill="#f5f5f5" />
        <Badge x={31} y={29} r={17} label="8" />
      </Cell>
      <Cell running>
        <circle cx="0" cy="56" r="41" fill="#efefef" />
        <FaGithub x={-39} y={17} size={78} color="#65308f" />
      </Cell>
      <Cell running>
        <circle cx="0" cy="52" r="37" fill="#86ba4a" />
        <path d="M5 34l24 24-22 30L0 52z" fill="#6fa03a" opacity=".6" />
        <path d="M-37 51h74" stroke="#79ab41" strokeWidth="1" />
        <path d="M-5 32h10v7q6 3 5 11-1 5-6 8l-4 2-4-2q-5-3-6-8-1-8 5-11z" fill="#616466" />
        <circle cx="0" cy="47" r="4" fill="#86ba4a" />
        <path d="M-4 58L-29 94M4 58l25 36" stroke="#f2f2f2" strokeWidth="6" />
        <path d="M-17 71q8 6 18 5 21-3 22-25" fill="none" stroke="#f2f2f2" strokeWidth="6" />
      </Cell>
      <Cell running>
        <rect x="-33" y="24" width="64" height="64" fill="url(#ij)" />
        <path d="M-33 56v32h22l10-8z" fill="#d8794a" opacity=".7" />
        <path d="M31 24v26l-22-26z" fill="#4f74e4" />
        <rect x="-26" y="31" width="50" height="50" fill="#0c0c0e" />
        <text x="-22" y="59" fontFamily="Liberation Mono" fontWeight="700" fontSize="27" textLength="30" lengthAdjust="spacingAndGlyphs" fill="#fff">IJ</text>
        <path d="M-21 71h18v3.500h-18z" fill="#fff" />
      </Cell>
      <Cell running>
        <path d="M5 26h34v60H5z" fill="#fbfbfb" />
        <path d="M8 35h24M8 43.500h24M8 52h24M8 60.500h24M8 69h24M8 77.500h24" stroke="#35486a" strokeWidth="3" />
        <path d="M-39 26L7 17v78l-46-12z" fill="url(#word)" />
        <text x="-17" y="69" textAnchor="middle" fontFamily="Open Sans" fontWeight="700" fontSize="34" textLength="28" lengthAdjust="spacingAndGlyphs" fill="#fff">W</text>
      </Cell>
      <div className="mt-[14px] ml-[20px] h-[88px] w-[2px] bg-[#9a9d9f]" />
      <svg className="ml-[31px] w-[74px] shrink-0 overflow-visible" height="118" viewBox="0 2 74 118">
        <rect x="8" y="14" width="58" height="20" fill="#fafafa" stroke="#bbb" strokeWidth=".8" />
        <path d="M38 20q9-6 18 0z" fill="#222" />
        <rect x="3" y="18" width="68" height="20" fill="#fafafa" stroke="#bbb" strokeWidth=".8" />
        <rect x="0" y="23" width="74" height="74" fill="#fafafa" />
        <rect x="4" y="27" width="66" height="65" fill="#3c4340" />
        <path d="M24 30h38v18H24z" fill="#59615f" />
        <path d="M58 48l12-4v10z" fill="#a35a4a" />
        <circle cx="37" cy="50" r="2.500" fill="none" stroke="#eee" />
        <g fontFamily="Roboto" fontWeight="700" fontSize="6" fill="#fff" textAnchor="middle">
          <text x="12" y="34">TNA</text>
          <text x="37" y="59" textLength="50" lengthAdjust="spacingAndGlyphs">WORK HARD QUIETLY,</text>
          <text x="37" y="66.500" textLength="64" lengthAdjust="spacingAndGlyphs">GET MAD IN, WAKE UP EARLY</text>
          <text x="37" y="74" textLength="42" lengthAdjust="spacingAndGlyphs"><tspan fill="#3fd9cf">STUDY HARD</tspan> AND</text>
          <text x="37" y="81.500">AT THE END</text>
          <text x="37" y="89" fill="#3fd9cf" textLength="44" lengthAdjust="spacingAndGlyphs">SURPRISE OTHERS.</text>
        </g>
      </svg>
      <svg className="ml-[27px] w-[64px] shrink-0 overflow-visible" height="118" viewBox="0 2 64 118">
        <path d="M1 26l7 62q1 7 24 7t24-7l7-62z" fill="url(#bin)" opacity=".93" />
        <ellipse cx="32" cy="26" rx="31" ry="9" fill="#9ea1a1" stroke="#eee" strokeWidth="1.500" />
        <path d="M12 26l8-10 8 4 4-5 8 7 6-6 8 12-10 10-14 2-14-4z" fill="#f5f5f5" />
        <path d="M20 28l4-8 6 10zM38 24l6-6 4 12z" fill="#54575c" />
        <path d="M24 30l6-6 4 10z" fill="#3fae8a" />
        <path d="M40 33l8-6 0 8z" fill="#a0563c" />
        <path d="M12 34l8 52M52 34l-8 52M26 44q8 10 18-2" fill="none" stroke="#fff" strokeWidth="2" opacity=".5" />
      </svg>
    </div>
  );
}

/* ------------------------------------------------------------------ */

export default function App() {
  return (
    <div className="flex h-[1800px] w-[2880px] flex-col overflow-hidden bg-[linear-gradient(90deg,#4e5556_0,#474d4e_76px,#5b6264_50%,#a4aaac_2800px,#bcc2c4_2880px)]">
      <MenuBar />
      <div className="relative flex h-[1636px] shrink-0 flex-col">
        <Toolbar />
        <SiteHeader />
        <ContactSection />
        <SiteFooter />
        <div className="absolute top-[1390px] right-[2px] h-[243px] w-[17px] rounded-full border-[2px] border-white/20 bg-black/50 bg-clip-padding" />
      </div>
      <div className="pl-[76px]">
        <Dock />
      </div>
    </div>
  );
}
